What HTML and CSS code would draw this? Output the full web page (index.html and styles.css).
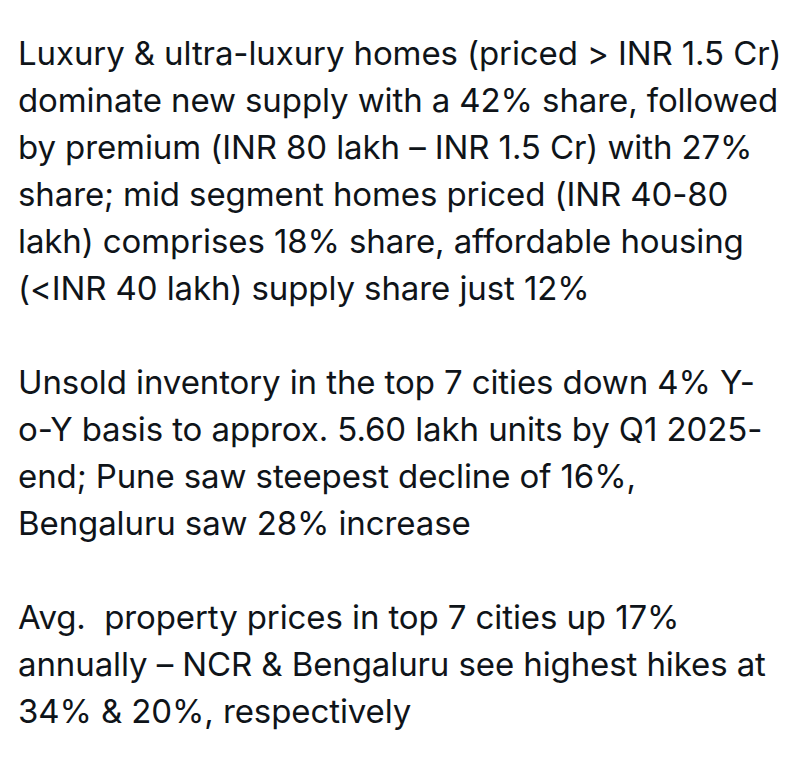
FILE: index.html
```html
<!DOCTYPE html>
<html>
<head>
<meta charset="utf-8">
<link rel="stylesheet" href="styles.css">
</head>
<body>
<main class="post">
  <p class="para">
    <span class="line">Luxury &amp; ultra-luxury homes (priced &gt; INR 1.5 Cr)</span>
    <span class="line">dominate new supply with a 42% share, followed</span>
    <span class="line">by premium (INR 80 lakh – INR 1.5 Cr) with 27%</span>
    <span class="line">share; mid segment homes priced (INR 40-80</span>
    <span class="line">lakh) comprises 18% share, affordable housing</span>
    <span class="line">(&lt;INR 40 lakh) supply share just 12%</span>
  </p>
  <p class="para">
    <span class="line">Unsold inventory in the top 7 cities down 4% Y-</span>
    <span class="line">o-Y basis to approx. 5.60 lakh units by Q1 2025-</span>
    <span class="line">end; Pune saw steepest decline of 16%,</span>
    <span class="line">Bengaluru saw 28% increase</span>
  </p>
  <p class="para">
    <span class="line">Avg.&nbsp; property prices in top 7 cities up 17%</span>
    <span class="line">annually – NCR &amp; Bengaluru see highest hikes at</span>
    <span class="line">34% &amp; 20%, respectively</span>
  </p>
</main>
</body>
</html>
```
FILE: styles.css
```css
html, body {
  margin: 0;
  padding: 0;
  background: #ffffff;
}
.post {
  padding: 30px 0 0 18px;
  font-family: Inter, "Noto Sans", sans-serif;
  font-size: 33px;
  line-height: 47px;
  letter-spacing: -0.1px;
  color: #0f1419;
  display: flex;
  flex-direction: column;
  gap: 47px;
}
.para {
  margin: 0;
  display: flex;
  flex-direction: column;
}
.line {
  display: block;
  white-space: nowrap;
}
```
